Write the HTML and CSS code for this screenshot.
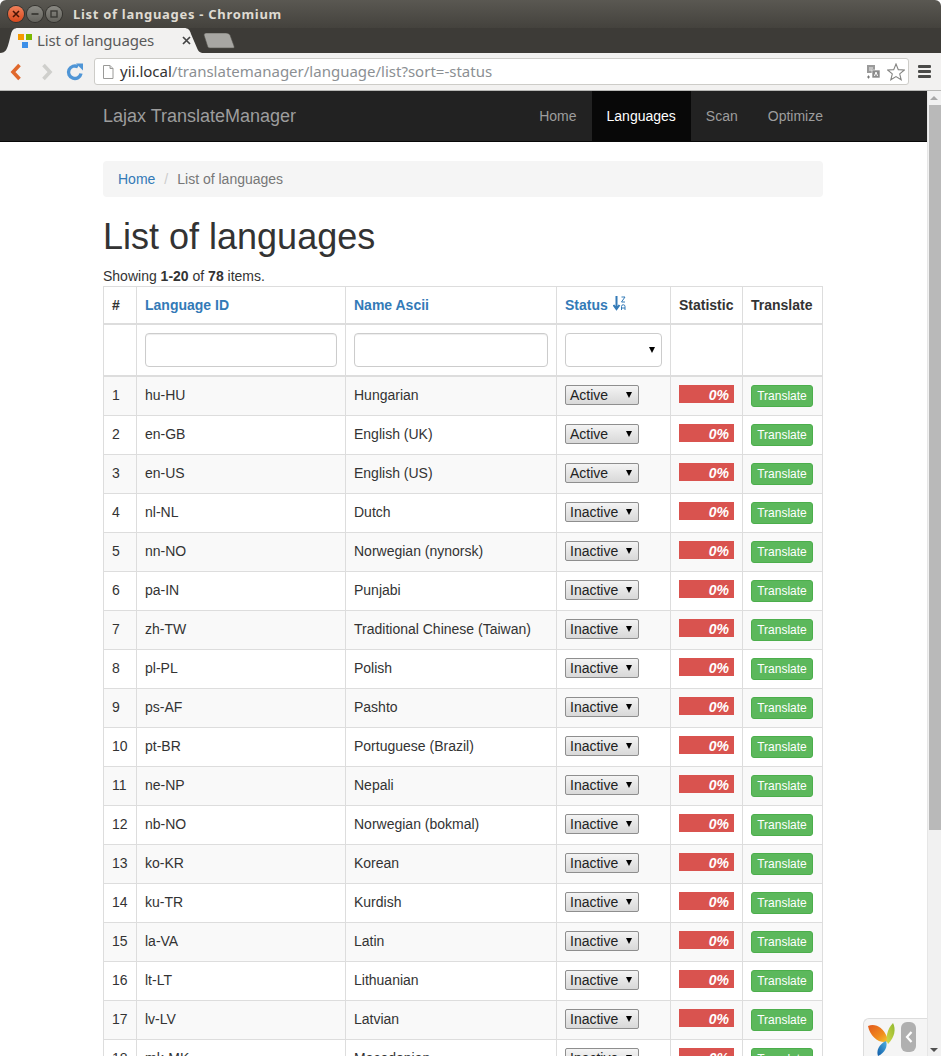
FILE: index.html
```html
<!DOCTYPE html>
<html lang="en">
<head>
<meta charset="utf-8">
<title>List of languages</title>
<link rel="stylesheet" href="styles.css">
</head>
<body>
<header class="chrome">
  <div class="titlebar">
    <div class="winbtns">
      <span class="winbtn close"><svg width="10" height="10" viewBox="0 0 10 10"><path d="M2 2l6 6M8 2l-6 6" stroke="#4a1405" stroke-width="1.6"/></svg></span>
      <span class="winbtn"><svg width="10" height="10" viewBox="0 0 10 10"><path d="M1.5 5h7" stroke="#3a3935" stroke-width="1.8"/></svg></span>
      <span class="winbtn"><svg width="10" height="10" viewBox="0 0 10 10"><rect x="2" y="2" width="6" height="6" fill="none" stroke="#3a3935" stroke-width="1.4"/></svg></span>
    </div>
    <div class="wintitle">List of languages - Chromium</div>
  </div>
  <div class="tabstrip">
    <div class="tab">
      <svg class="tabshape" width="204" height="25" viewBox="0 0 204 25"><path d="M0 25C6 25 7 21 9 14L11 6C12 2 14 0 18 0H184C188 0 190 2 191 6L197 20C198 23 200 25 204 25Z" fill="#f2f1f0"/></svg>
      <svg class="favicon" width="14" height="14" viewBox="0 0 14 14"><rect x="0" y="0" width="6" height="6" fill="#f59a00"/><rect x="8" y="0" width="6" height="6" fill="#7ab800"/><rect x="4" y="8" width="6" height="6" fill="#3d8fe8"/></svg>
      <span class="tabtext">List of languages</span>
      <svg class="tabclose" width="9" height="9" viewBox="0 0 9 9"><path d="M1 1l7 7M8 1l-7 7" stroke="#444" stroke-width="1.7"/></svg>
    </div>
    <svg class="newtab" width="32" height="16" viewBox="0 0 32 16"><path d="M1 2C1 1 2 0 3 0H23C25 0 26 1 27 2L31 13C31.500 15 31 15 30 15H7C5 15 5 14 4.500 13Z" fill="#a8a7a3" stroke="#55544f" stroke-width=".6"/></svg>
  </div>
  <div class="toolbar">
    <svg class="tool" width="14" height="18" viewBox="0 0 14 18"><path d="M10.500 2L4 9l6.500 7" fill="none" stroke="#e0682c" stroke-width="3.600"/></svg>
    <svg class="tool fwd" width="14" height="18" viewBox="0 0 14 18"><path d="M3.500 2L10 9l-6.500 7" fill="none" stroke="#cfcfcc" stroke-width="3.600"/></svg>
    <svg class="tool reload" width="18" height="18" viewBox="0 0 18 18"><path d="M15 10.500A6.300 6.300 0 1 1 12 3.800" fill="none" stroke="#4f95d6" stroke-width="3.400"/><path d="M10 .5h7v7z" fill="#4f95d6"/></svg>
    <div class="omnibox">
      <svg class="docicon" width="12" height="14" viewBox="0 0 12 14"><path d="M1.500.5H8L11 3.500V13.500H1.500Z" fill="#fff" stroke="#9a9a98"/><path d="M8 .5V3.500H11" fill="#ddd" stroke="#9a9a98"/></svg>
      <span class="url"><span class="host">yii.local</span>/translatemanager/language/list?sort=-status</span>
      <svg class="xlate" width="14" height="14" viewBox="0 0 14 14"><rect x="1" y="0" width="8" height="8" fill="#9a9a9a"/><rect x="6" y="5" width="8" height="8" fill="#8a8a8a" stroke="#fff" stroke-width=".6"/><path d="M3 3h4M3 5h3" stroke="#eee"/><path d="M8.500 11l1.500-4 1.500 4" fill="none" stroke="#fff"/><path d="M1 12h3M2.500 10.500v3" stroke="#777"/></svg>
      <svg class="star" width="18" height="18" viewBox="0 0 18 18"><path d="M9 1l2.300 5.600 6 .4-4.600 3.900 1.500 5.900L9 13.600 3.800 16.800l1.500-5.900L.7 7l6-.4z" fill="#fff" stroke="#858583" stroke-width="1.100"/></svg>
    </div>
    <div class="hamburger"><i></i><i></i><i></i></div>
  </div>
</header>

<div class="viewport">
  <div class="page">
    <nav class="navbar">
      <div class="container navrow">
        <a class="brand">Lajax TranslateManager</a>
        <ul class="navlinks">
          <li><a>Home</a></li>
          <li class="active"><a>Languages</a></li>
          <li><a>Scan</a></li>
          <li><a>Optimize</a></li>
        </ul>
      </div>
    </nav>
    <main class="container">
      <ol class="breadcrumb">
        <li><a>Home</a></li>
        <li class="sep">/</li>
        <li class="current">List of languages</li>
      </ol>
      <h1>List of languages</h1>
      <div class="summary">Showing <b>1-20</b> of <b>78</b> items.</div>
      <table class="grid">
        <thead>
          <tr>
            <th class="c-num">#</th>
            <th class="c-id"><a>Language ID</a></th>
            <th class="c-name"><a>Name Ascii</a></th>
            <th class="c-status"><a>Status <svg class="sorticon" width="13" height="15" viewBox="0 0 13 15"><path d="M3.500 0v12M.5 9l3 4 3-4" fill="none" stroke="#337ab7" stroke-width="2"/><path d="M8.500 1h3.500L8.500 6H12M8.500 14V10.500a1.700 1.700 0 0 1 3.500 0V14M8.500 12H12" fill="none" stroke="#337ab7"/></svg></a></th>
            <th class="c-stat">Statistic</th>
            <th class="c-act">Translate</th>
          </tr>
          <tr class="filters">
            <td></td>
            <td><input class="fc" type="text"></td>
            <td><input class="fc" type="text"></td>
            <td><div class="fsel"></div></td>
            <td></td>
            <td></td>
          </tr>
        </thead>
        <tbody>
          <tr><td>1</td><td>hu-HU</td><td>Hungarian</td><td><div class="sel">Active</div></td><td><div class="bar">0%</div></td><td><a class="btn">Translate</a></td></tr>
          <tr><td>2</td><td>en-GB</td><td>English (UK)</td><td><div class="sel">Active</div></td><td><div class="bar">0%</div></td><td><a class="btn">Translate</a></td></tr>
          <tr><td>3</td><td>en-US</td><td>English (US)</td><td><div class="sel">Active</div></td><td><div class="bar">0%</div></td><td><a class="btn">Translate</a></td></tr>
          <tr><td>4</td><td>nl-NL</td><td>Dutch</td><td><div class="sel">Inactive</div></td><td><div class="bar">0%</div></td><td><a class="btn">Translate</a></td></tr>
          <tr><td>5</td><td>nn-NO</td><td>Norwegian (nynorsk)</td><td><div class="sel">Inactive</div></td><td><div class="bar">0%</div></td><td><a class="btn">Translate</a></td></tr>
          <tr><td>6</td><td>pa-IN</td><td>Punjabi</td><td><div class="sel">Inactive</div></td><td><div class="bar">0%</div></td><td><a class="btn">Translate</a></td></tr>
          <tr><td>7</td><td>zh-TW</td><td>Traditional Chinese (Taiwan)</td><td><div class="sel">Inactive</div></td><td><div class="bar">0%</div></td><td><a class="btn">Translate</a></td></tr>
          <tr><td>8</td><td>pl-PL</td><td>Polish</td><td><div class="sel">Inactive</div></td><td><div class="bar">0%</div></td><td><a class="btn">Translate</a></td></tr>
          <tr><td>9</td><td>ps-AF</td><td>Pashto</td><td><div class="sel">Inactive</div></td><td><div class="bar">0%</div></td><td><a class="btn">Translate</a></td></tr>
          <tr><td>10</td><td>pt-BR</td><td>Portuguese (Brazil)</td><td><div class="sel">Inactive</div></td><td><div class="bar">0%</div></td><td><a class="btn">Translate</a></td></tr>
          <tr><td>11</td><td>ne-NP</td><td>Nepali</td><td><div class="sel">Inactive</div></td><td><div class="bar">0%</div></td><td><a class="btn">Translate</a></td></tr>
          <tr><td>12</td><td>nb-NO</td><td>Norwegian (bokmal)</td><td><div class="sel">Inactive</div></td><td><div class="bar">0%</div></td><td><a class="btn">Translate</a></td></tr>
          <tr><td>13</td><td>ko-KR</td><td>Korean</td><td><div class="sel">Inactive</div></td><td><div class="bar">0%</div></td><td><a class="btn">Translate</a></td></tr>
          <tr><td>14</td><td>ku-TR</td><td>Kurdish</td><td><div class="sel">Inactive</div></td><td><div class="bar">0%</div></td><td><a class="btn">Translate</a></td></tr>
          <tr><td>15</td><td>la-VA</td><td>Latin</td><td><div class="sel">Inactive</div></td><td><div class="bar">0%</div></td><td><a class="btn">Translate</a></td></tr>
          <tr><td>16</td><td>lt-LT</td><td>Lithuanian</td><td><div class="sel">Inactive</div></td><td><div class="bar">0%</div></td><td><a class="btn">Translate</a></td></tr>
          <tr><td>17</td><td>lv-LV</td><td>Latvian</td><td><div class="sel">Inactive</div></td><td><div class="bar">0%</div></td><td><a class="btn">Translate</a></td></tr>
          <tr><td>18</td><td>mk-MK</td><td>Macedonian</td><td><div class="sel">Inactive</div></td><td><div class="bar">0%</div></td><td><a class="btn">Translate</a></td></tr>
        </tbody>
      </table>
    </main>
    <div class="yiibar">
      <svg width="30" height="34" viewBox="0 0 30 34">
        <defs>
          <linearGradient id="yo" x1="0" y1="0" x2="1" y2="1"><stop offset="0" stop-color="#e2581c"/><stop offset=".6" stop-color="#f08a1d"/><stop offset="1" stop-color="#f6c52e"/></linearGradient>
          <linearGradient id="yg" x1="1" y1="0" x2="0" y2="1"><stop offset="0" stop-color="#8fb82f"/><stop offset="1" stop-color="#d5d84a"/></linearGradient>
          <linearGradient id="yb" x1="1" y1="0" x2="0" y2="1"><stop offset="0" stop-color="#4fb1e0"/><stop offset="1" stop-color="#0f5ba8"/></linearGradient>
        </defs>
        <path d="M1 4C8 1 16 5 20 15C21 18 20 20 19 20C11 21 3 14 1 4Z" fill="url(#yo)"/>
        <path d="M26 1C29 7 28 15 21 22C18 17 20 7 26 1Z" fill="url(#yg)"/>
        <path d="M19 19C21 24 18 31 11 34C9 29 12 22 19 19Z" fill="url(#yb)"/>
      </svg>
      <div class="yiitoggle"><svg width="8" height="14" viewBox="0 0 8 14"><path d="M6.500 2L2 7l4.500 5" fill="none" stroke="#fff" stroke-width="2.200"/></svg></div>
    </div>
  </div>
  <aside class="scrollbar">
    <div class="arrow up"></div>
    <div class="thumb"></div>
    <div class="track"></div>
    <div class="arrow down"></div>
  </aside>
</div>
</body>
</html>
```
FILE: styles.css
```css
* { box-sizing: border-box; }
html, body { margin: 0; padding: 0; height: 1056px; overflow: hidden; }
body { display: flex; flex-direction: column; background: #fff; color: #333; font: 14px/20px "Liberation Sans", Arial, sans-serif; }

/* browser chrome */
.chrome { height: 91px; flex: none; display: flex; flex-direction: column; }
.titlebar { height: 28px; flex: none; display: flex; align-items: center; background: linear-gradient(#5a5852, #44423d); border-radius: 6px 6px 0 0; }
.winbtns { display: flex; gap: 3px; padding-left: 8px; width: 73px; }
.winbtn { width: 16px; height: 16px; border-radius: 50%; display: flex; align-items: center; justify-content: center; background: linear-gradient(#8a8983, #64635d); box-shadow: 0 0 0 1px #33322e; }
.winbtn.close { background: linear-gradient(#f0805a, #d9481c); }
.wintitle { font: bold 13px/16px "Noto Sans", "Open Sans", sans-serif; letter-spacing: .7px; color: #dfdbd2; }
.tabstrip { height: 25px; flex: none; display: flex; align-items: flex-end; background: #3d3b37; padding-left: 0; }
.tab { position: relative; width: 204px; height: 25px; display: flex; align-items: center; }
.tabshape { position: absolute; left: 0; top: 0; }
.favicon { position: relative; margin-left: 18px; }
.tabtext { position: relative; margin: -2px 0 0 5px; font: 15px/20px "Noto Sans", sans-serif; color: #5a5a5a; width: 143px; white-space: nowrap; letter-spacing: -.15px; }
.tabclose { position: relative; margin-left: 2px; }
.newtab { margin: 0 0 4px -1px; }
.toolbar { height: 38px; flex: none; display: flex; align-items: center; background: #f2f1f0; padding-left: 9px; border-bottom: 1px solid #b8b8b6; }
.tool { flex: none; }
.tool.fwd { margin-left: 17px; }
.tool.reload { margin-left: 12px; }
.omnibox { margin-left: 10px; width: 815px; height: 27px; display: flex; align-items: center; background: #fff; border: 1px solid #cdccc8; border-radius: 3px; padding-left: 7px; }
.docicon { flex: none; }
.url { margin: -2px 0 0 6px; font: 15px/20px "Noto Sans", sans-serif; color: #8b8f93; flex: 1; white-space: nowrap; }
.host { color: #333; }
.xlate { flex: none; margin-right: 7px; }
.star { flex: none; margin-right: 3px; }
.hamburger { margin-left: 9px; width: 13px; display: flex; flex-direction: column; gap: 2px; }
.hamburger i { display: block; height: 3px; background: #4a4a48; border-radius: 1px; }

/* viewport */
.viewport { flex: 1; display: flex; min-height: 0; }
.page { position: relative; flex: 1; min-width: 0; overflow: hidden; }
.scrollbar { flex: none; width: 14px; display: flex; flex-direction: column; background: #f1f1f1; border-left: 1px solid #e6e6e6; }
.arrow { height: 14px; flex: none; position: relative; }
.arrow::after { content: ""; position: absolute; left: 2px; border-left: 4px solid transparent; border-right: 4px solid transparent; }
.arrow.up::after { top: 5px; border-bottom: 4px solid #a8a8a8; }
.arrow.down::after { top: 6px; border-top: 4px solid #505050; }
.thumb { height: 725px; flex: none; margin: 0 0 0 1px; width: 12px; background: #b9b9b9; }
.track { flex: 1; }

.container { width: 720px; margin-left: 103px; }
.navbar { height: 51px; background: #222; border-bottom: 1px solid #080808; margin-bottom: 19px; }
.navrow { display: flex; justify-content: space-between; height: 50px; }
.brand { font-size: 18px; line-height: 50px; color: #9d9d9d; }
.navlinks { display: flex; list-style: none; margin: 0 -15px 0 0; padding: 0; }
.navlinks a { display: block; padding: 15px; color: #9d9d9d; }
.navlinks .active a { color: #fff; background: #080808; }

.breadcrumb { display: flex; list-style: none; margin: 0 0 20px; padding: 8px 15px; background: #f5f5f5; border-radius: 4px; height: 36px; }
.breadcrumb a { color: #337ab7; }
.breadcrumb .sep { color: #ccc; padding: 0 9px; }
.breadcrumb .current { color: #777; }
h1 { font: 500 36px/40px "Liberation Sans", Arial, sans-serif; margin: 0 0 9px; color: #333; }
.summary { height: 20px; margin-top: 0; }

.grid { width: 719px; table-layout: fixed; border-collapse: collapse; }
.grid th, .grid td { border: 1px solid #ddd; padding: 8px; text-align: left; vertical-align: middle; }
.grid thead th { border-bottom-width: 2px; font-weight: bold; padding-top: 8px; padding-bottom: 8px; height: 37px; }
.grid thead a { color: #337ab7; }
.c-num { width: 33px; }
.c-id { width: 209px; }
.c-name { width: 211px; }
.c-status { width: 114px; }
.c-stat { width: 72px; }
.c-act { width: 80px; }
.sorticon { vertical-align: -1px; margin-left: 1px; }
.filters td { border-bottom-width: 2px; height: 51px; }
.fc { display: block; width: 100%; height: 34px; border: 1px solid #ccc; border-radius: 4px; background: #fff; box-shadow: inset 0 1px 1px rgba(0,0,0,.075); }
.fsel { position: relative; height: 34px; border: 1px solid #ccc; border-radius: 4px; background: #fff; width: 97px; }
.fsel::after { content: ""; position: absolute; right: 6px; top: 13px; border-left: 3px solid transparent; border-right: 3px solid transparent; border-top: 6px solid #000; }
.grid tbody tr { height: 39px; }
.grid tbody td { vertical-align: top; }
.grid tbody tr:nth-child(odd) td { background: #f9f9f9; }
.sel { position: relative; width: 74px; height: 20px; border: 1px solid #8e8e8e; border-radius: 2px; background: linear-gradient(#f4f4f4, #d8d8d8); padding-left: 4px; line-height: 18px; color: #222; margin-bottom: 2px; }
.sel::after { content: ""; position: absolute; right: 6px; top: 6px; border-left: 3px solid transparent; border-right: 3px solid transparent; border-top: 6px solid #000; }
.bar { height: 18px; width: 55px; background: #d9534f; color: #fff; font-weight: bold; font-style: italic; line-height: 20px; text-align: right; padding-right: 5px; margin-bottom: 4px; }
.btn { display: block; width: 62px; height: 22px; background: #5cb85c; border: 1px solid #4cae4c; border-radius: 3px; color: #fff; font-size: 12px; line-height: 20px; text-align: center; }

.yiibar { position: absolute; right: 0; bottom: 0; width: 64px; height: 38px; background: #f5f5f5; border: 1px solid #ddd; border-width: 1px 0 0 1px; border-radius: 6px 0 0 0; display: flex; align-items: flex-start; padding: 3px 0 0 3px; gap: 4px; }
.yiitoggle { width: 15px; height: 30px; margin-top: 0; background: #b0b0b0; border-radius: 6px; display: flex; align-items: center; justify-content: center; }
```
